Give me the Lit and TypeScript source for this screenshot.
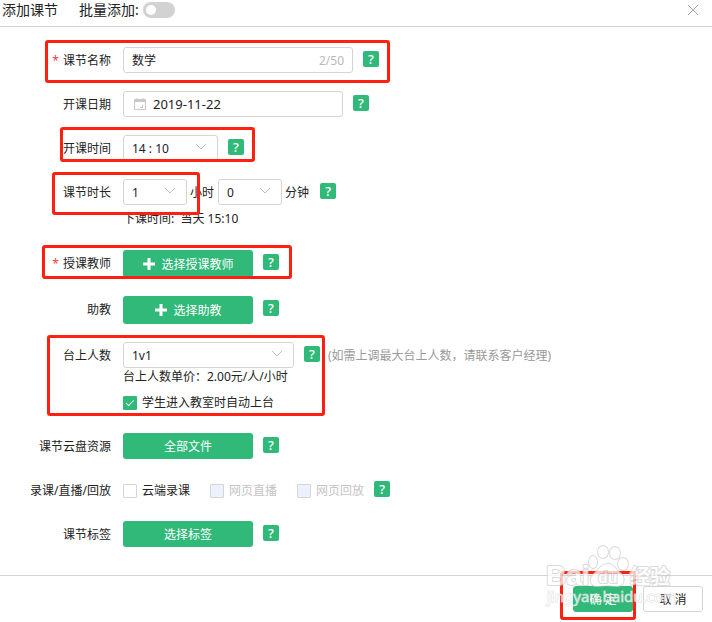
import { LitElement, html, svg, css, nothing } from "lit";
import { customElement, property } from "lit/decorators.js";

const chevron = html`<svg class="chevron" viewBox="0 0 12 8" width="12" height="8" aria-hidden="true">
  <path d="M1 1 L6 6 L11 1" fill="none" stroke="#c0c0c0" stroke-width="1"></path>
</svg>`;

const plus = html`<svg viewBox="0 0 14 14" width="14" height="14" aria-hidden="true">
  <path d="M7 0V12M1 6H13" stroke="#fff" stroke-width="3" fill="none"></path>
</svg>`;

@customElement("help-tip")
class HelpTip extends LitElement {
  static styles = css`
    :host {
      display: block;
      flex: none;
      margin: 0 0 2px 10px;
    }
    .help {
      display: block;
      width: 16px;
      height: 16px;
      padding: 0;
      border: 0;
      border-radius: 2px;
      background: #30b978;
      color: #fff;
      font: 500 13px/16px "Noto Sans", sans-serif;
      text-align: center;
    }
  `;
  render() {
    return html`<button class="help" type="button" aria-label="帮助">?</button>`;
  }
}

@customElement("drop-down")
class DropDown extends LitElement {
  @property() value = "";
  @property() label = "";
  static styles = css`
    :host {
      display: grid;
      align-items: center;
      height: 26px;
    }
    .select,
    .chevron {
      grid-area: 1 / 1;
    }
    .select {
      box-sizing: border-box;
      width: 100%;
      height: 26px;
      padding: 2px 8px 0;
      border: 1px solid #d5d5d5;
      border-radius: 3px;
      background: #fff;
      color: #222;
      font: inherit;
      appearance: none;
    }
    .chevron {
      justify-self: end;
      margin: 0 11px 2px 0;
      pointer-events: none;
    }
  `;
  render() {
    return html`<select class="select" aria-label=${this.label}>
        <option>${this.value}</option>
      </select>
      ${chevron}`;
  }
}

@customElement("app-root")
class AppRoot extends LitElement {
  static styles = css`
    :host {
      display: block;
      position: relative;
      background: #fff;
      color: #222;
      font: 12px/18px "Noto Sans", "Noto Sans CJK SC", sans-serif;
    }
    button,
    input {
      font: inherit;
      box-sizing: border-box;
    }
    .head {
      display: flex;
      align-items: flex-start;
      box-sizing: border-box;
      height: 27px;
      padding: 0 12px 0 2px;
      border-bottom: 1px solid #d5d5d5;
      font-size: 14px;
      line-height: 20px;
    }
    .title {
      margin: 0 21px 0 0;
      font: inherit;
    }
    .batch {
      display: flex;
      align-items: center;
      gap: 4px;
      flex: 1;
    }
    .switch {
      appearance: none;
      width: 32px;
      height: 16px;
      margin: 0;
      padding: 3px;
      border-radius: 8px;
      background: #d2d2d2;
    }
    .switch::before {
      content: "";
      display: block;
      width: 10px;
      height: 10px;
      border-radius: 50%;
      background: #fff;
    }
    .close {
      display: flex;
      align-items: center;
      height: 20px;
      padding: 0;
      border: 0;
      background: none;
    }
    .form {
      display: flex;
      flex-direction: column;
      gap: 18px;
      padding: 20px 0 28px;
    }
    .row {
      position: relative;
      display: grid;
      grid-template-columns: 111px minmax(0, 1fr);
      column-gap: 12px;
    }
    .name {
      height: 26px;
      text-align: right;
      line-height: 28px;
      white-space: nowrap;
    }
    .req {
      margin-right: 4px;
      color: #f04040;
    }
    .line {
      display: flex;
      align-items: center;
      min-height: 26px;
      white-space: nowrap;
    }
    .box {
      display: flex;
      align-items: center;
      box-sizing: border-box;
      height: 26px;
      border: 1px solid #d5d5d5;
      border-radius: 3px;
      padding: 2px 8px 0;
    }
    .input {
      flex: 1;
      min-width: 0;
      padding: 0;
      border: 0;
      outline: 0;
      color: #222;
      background: none;
    }
    .count {
      color: #b8b8b8;
    }
    .w230 {
      width: 230px;
    }
    .date {
      width: 220px;
      gap: 7px;
      padding: 0 10px;
      font-size: 13px;
    }
    .time {
      width: 95px;
    }
    .short {
      width: 64px;
    }
    .wide {
      width: 171px;
    }
    .unit {
      margin: 0 4px 0 3px;
      line-height: 20px;
      padding-top: 2px;
    }
    .unit + help-tip {
      margin-left: 7px;
    }
    .ends {
      line-height: 27px;
      white-space: pre;
    }
    .main {
      display: flex;
      align-items: center;
      justify-content: center;
      gap: 5px;
      width: 130px;
      height: 26px;
      padding: 2px 0 0;
      border: 0;
      border-radius: 3px;
      background: #30b978;
      color: #fff;
    }
    .tall {
      height: 28px;
    }
    .tall + help-tip {
      margin-bottom: 5px;
    }
    .hint {
      margin-left: 8px;
      padding-top: 2px;
      color: #999;
    }
    .price {
      margin-bottom: 4px;
    }
    .tick {
      display: flex;
      align-items: center;
      gap: 5px;
      height: 25px;
    }
    .line .tick {
      height: 27px;
      margin-bottom: -1px;
    }
    .tick + .tick {
      margin-left: 20px;
    }
    .check {
      appearance: none;
      display: grid;
      width: 14px;
      height: 14px;
      margin: 0;
      border: 1px solid #d5d5d5;
      border-radius: 1px;
      background: #fff;
    }
    .check:checked {
      border-color: #30b978;
      background: #30b978;
    }
    .check:checked::before {
      content: "";
      place-self: center;
      width: 8px;
      height: 4px;
      box-sizing: border-box;
      border: solid #fff;
      border-width: 0 0 1px 1px;
      rotate: -45deg;
      margin-bottom: 2px;
    }
    .check:disabled {
      background: #edf1fd;
    }
    .off {
      color: #c4c4c4;
    }
    .foot {
      display: flex;
      justify-content: flex-end;
      gap: 10px;
      padding: 10px 9px;
      border-top: 1px solid #d5d5d5;
    }
    .act {
      position: relative;
      width: 60px;
      height: 26px;
      padding: 2px 0 0;
      border: 1px solid #d5d5d5;
      border-radius: 3px;
      background: #fff;
      color: #222;
    }
    .ok {
      border-color: #30b978;
      background: #30b978;
      color: #fff;
    }
    .mark {
      position: absolute;
      box-sizing: border-box;
      border: 3px solid #ff2010;
      border-radius: 3px;
      pointer-events: none;
    }
    .m-name { left: 45px; width: 345px; top: -7px; height: 43px; }
    .m-time { left: 60px; width: 195px; top: -8px; height: 35px; }
    .m-span { left: 52px; width: 148px; top: -7px; height: 43px; }
    .m-teacher { left: 42px; width: 250px; top: -5px; height: 34px; }
    .m-stage { left: 47px; width: 278px; top: -7px; height: 81px; }
    .m-ok { inset: -16px -4px -9px -14px; }
    .brand {
      position: absolute;
      right: 36px;
      bottom: 12px;
      pointer-events: none;
    }
  `;

  private row(name: string, body: unknown, opts: { req?: boolean; mark?: string } = {}) {
    return html`<div class="row" role="group" aria-label=${name}>
      <span class="name">${opts.req ? html`<span class="req">*</span>` : nothing}${name}</span>
      <div>${body}</div>
      ${opts.mark ? html`<div class="mark ${opts.mark}"></div>` : nothing}
    </div>`;
  }

  private tick(text: string, checked = false, disabled = false) {
    return html`<label class="tick ${disabled ? "off" : ""}">
      <input class="check" type="checkbox" .checked=${checked} ?disabled=${disabled} />${text}
    </label>`;
  }

  private brand() {
    const paw = svg`
      <ellipse cx="49" cy="24" rx="4" ry="6"></ellipse>
      <ellipse cx="59" cy="14" rx="5" ry="6"></ellipse>
      <ellipse cx="71" cy="15" rx="5" ry="6"></ellipse>
      <ellipse cx="79" cy="26" rx="5" ry="6"></ellipse>
      <path d="M64 26C57 26 55 32 50 36C44 41 47 49 54 48C60 47 66 47 71 48C80 49 82 41 77 36C72 32 70 26 64 26Z"></path>`;
    return html`<svg class="brand" viewBox="0 0 132 72" width="132" height="72" aria-hidden="true" opacity="0.75">
      <g fill="#fff" stroke="#cfcfcf" stroke-width="2" stroke-linejoin="round" paint-order="stroke">
        ${paw}
        <g font-family="Liberation Sans, Noto Sans CJK SC, sans-serif" font-weight="700">
          <text x="2" y="47" font-size="28">Bai</text>
          <text x="54" y="45" font-size="16">du</text>
          <text x="86" y="46" font-size="20">经验</text>
        </g>
        <text x="3" y="64" font-size="15" stroke-width="1" font-family="Noto Sans, sans-serif">jingyan.baidu.com</text>
      </g>
    </svg>`;
  }

  render() {
    return html`
      <header class="head">
        <h1 class="title">添加课节</h1>
        <label class="batch">批量添加:<input class="switch" type="checkbox" role="switch" /></label>
        <button class="close" type="button" aria-label="关闭">
          <svg viewBox="0 0 14 14" width="14" height="14">
            <path d="M2 2L12 12M12 2L2 12" stroke="#a4abb8" stroke-width="1" fill="none"></path>
          </svg>
        </button>
      </header>
      <form class="form">
        ${this.row(
          "课节名称",
          html`<div class="line">
            <div class="box w230">
              <input class="input" type="text" aria-label="课节名称" .value=${"数学"} /><span class="count">2/50</span>
            </div>
            <help-tip></help-tip>
          </div>`,
          { req: true, mark: "m-name" }
        )}
        ${this.row(
          "开课日期",
          html`<div class="line">
            <div class="box date">
              <svg viewBox="0 0 12 12" width="12" height="12" aria-hidden="true">
                <path d="M0.5 1.5H11.5V11.5H0.5Z" fill="none" stroke="#c8c8c8"></path>
                <path d="M0 3H12" stroke="#c8c8c8" stroke-width="2"></path>
                <path d="M3 0V3M9 0V3M6 9.5H9M8.5 7V10" stroke="#c8c8c8" fill="none"></path>
              </svg>
              <input class="input" type="text" aria-label="开课日期" .value=${"2019-11-22"} />
            </div>
            <help-tip></help-tip>
          </div>`
        )}
        ${this.row(
          "开课时间",
          html`<div class="line">
            <drop-down class="time" label="开课时间" value="14 : 10"></drop-down>
            <help-tip></help-tip>
          </div>`,
          { mark: "m-time" }
        )}
        ${this.row(
          "课节时长",
          html`<div class="line">
              <drop-down class="short" label="小时" value="1"></drop-down>
              <span class="unit">小时</span>
              <drop-down class="short" label="分钟" value="0"></drop-down>
              <span class="unit">分钟</span>
              <help-tip></help-tip>
            </div>
            <div class="ends">下课时间:  当天 15:10</div>`,
          { mark: "m-span" }
        )}
        ${this.row(
          "授课教师",
          html`<div class="line">
            <button class="main tall" type="button">${plus}选择授课教师</button>
            <help-tip></help-tip>
          </div>`,
          { req: true, mark: "m-teacher" }
        )}
        ${this.row(
          "助教",
          html`<div class="line">
            <button class="main tall" type="button">${plus}选择助教</button>
            <help-tip></help-tip>
          </div>`
        )}
        ${this.row(
          "台上人数",
          html`<div class="line">
              <drop-down class="wide" label="台上人数" value="1v1"></drop-down>
              <help-tip></help-tip>
              <span class="hint">(如需上调最大台上人数，请联系客户经理)</span>
            </div>
            <div class="price">台上人数单价：2.00元/人/小时</div>
            ${this.tick("学生进入教室时自动上台", true)}`,
          { mark: "m-stage" }
        )}
        ${this.row(
          "课节云盘资源",
          html`<div class="line">
            <button class="main" type="button">全部文件</button>
            <help-tip></help-tip>
          </div>`
        )}
        ${this.row(
          "录课/直播/回放",
          html`<div class="line">
            ${this.tick("云端录课")}${this.tick("网页直播", false, true)}${this.tick("网页回放", false, true)}
            <help-tip></help-tip>
          </div>`
        )}
        ${this.row(
          "课节标签",
          html`<div class="line">
            <button class="main" type="button">选择标签</button>
            <help-tip></help-tip>
          </div>`
        )}
      </form>
      <footer class="foot">
        <button class="act ok" type="button">确 定<span class="mark m-ok"></span></button>
        <button class="act" type="button">取 消</button>
      </footer>
      ${this.brand()}
    `;
  }
}
